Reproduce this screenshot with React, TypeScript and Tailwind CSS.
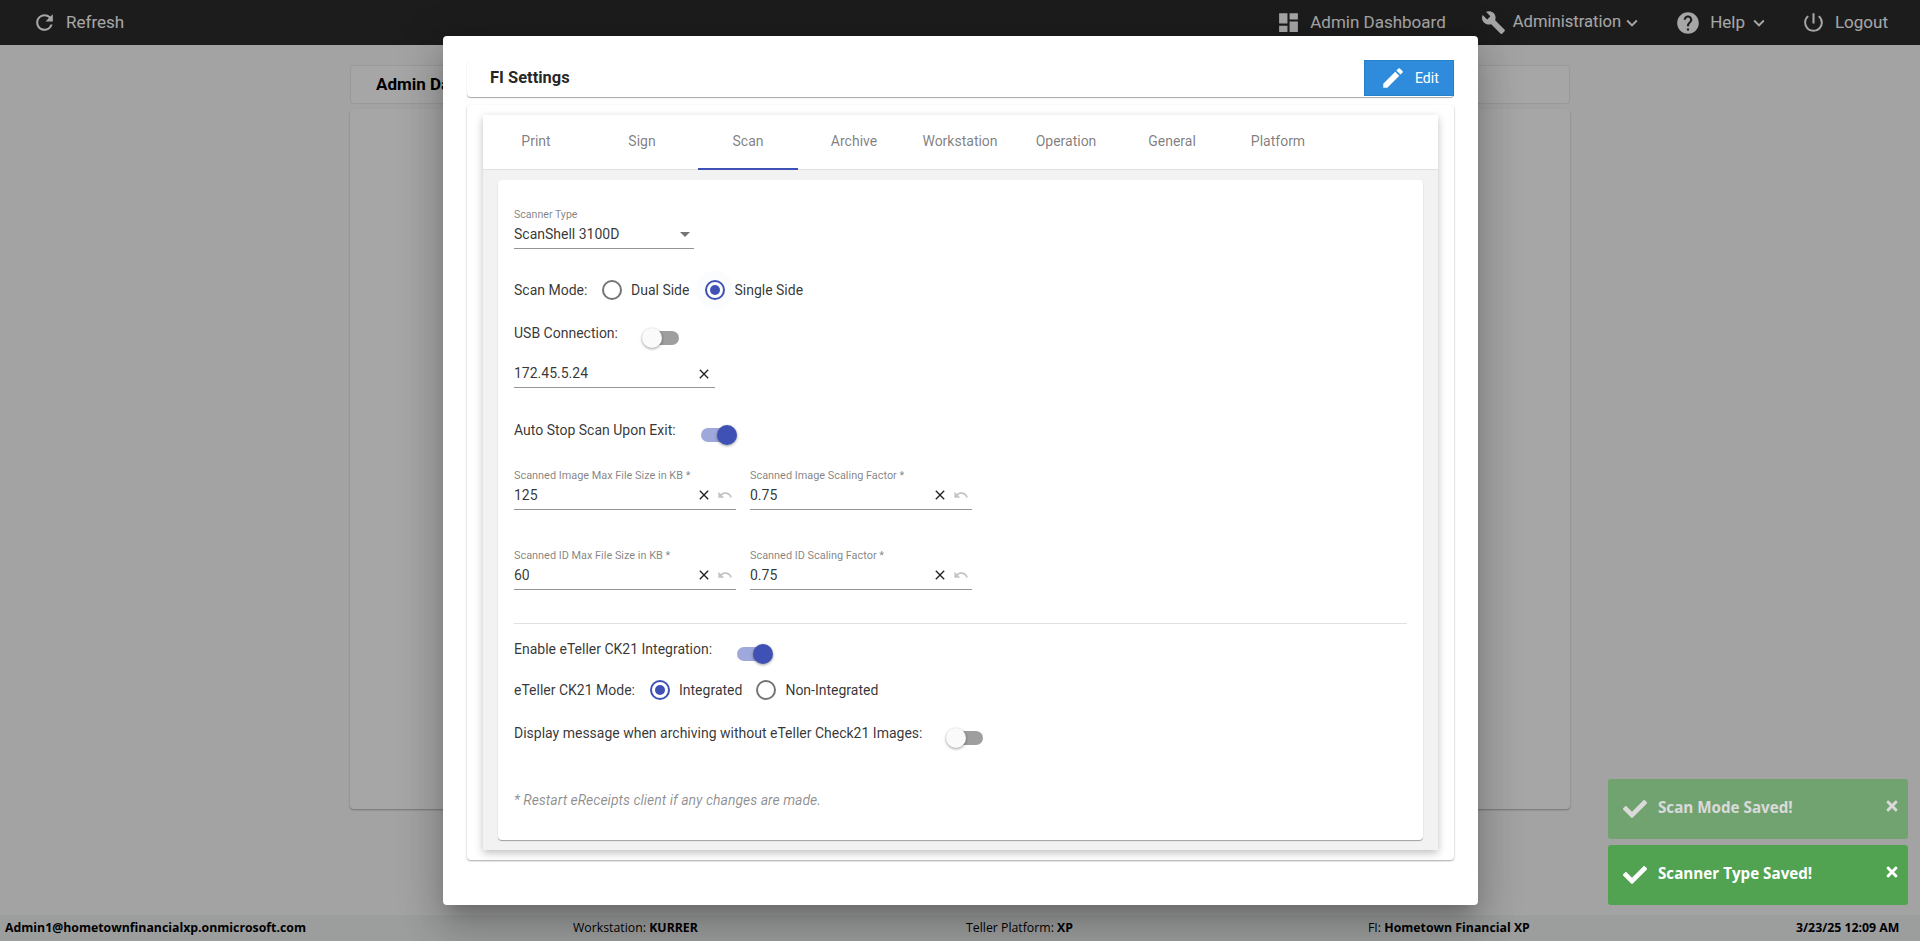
import React from "react";
import { FaCheck, FaTimes } from "react-icons/fa";
import {
  MdBuild,
  MdClose,
  MdDashboard,
  MdEdit,
  MdHelp,
  MdKeyboardArrowDown,
  MdPowerSettingsNew,
  MdRefresh,
  MdUndo,
} from "react-icons/md";

function Switch({ on, labelWidth, label }: { on?: boolean; labelWidth: string; label: string }) {
  return (
    <div className="flex items-start h-[38px]">
      <span className={`${labelWidth} mt-[4px] text-[14px] leading-[20px] text-[#000000cc]`}>{label}</span>
      <div className="relative w-[58px] h-[38px]">
        <div className={`absolute left-[12px] top-[12px] w-[34px] h-[14px] rounded-full ${on ? "bg-[#9fa8da]" : "bg-[#9e9e9e]"}`} />
        <div
          className={`absolute top-[9px] w-[20px] h-[20px] rounded-full shadow-[0_1px_3px_rgba(0,0,0,.4)] ${
            on ? "left-[28px] bg-[#3f51b5]" : "left-[9px] bg-[#fafafa]"
          }`}
        />
      </div>
    </div>
  );
}

function Radio({ label, checked, halo }: { label: string; checked?: boolean; halo?: boolean }) {
  return (
    <div className="flex items-center h-[38px]">
      <div className={`w-[38px] h-[38px] rounded-full flex items-center justify-center ${halo ? "bg-[#3f51b505]" : ""}`}>
        <div
          className={`w-[20px] h-[20px] rounded-full border-2 flex items-center justify-center ${
            checked ? "border-[#3f51b5]" : "border-[#757575]"
          }`}
        >
          {checked && <div className="w-[10px] h-[10px] rounded-full bg-[#3f51b5]" />}
        </div>
      </div>
      <span className="text-[14px] text-[#000000cc]">{label}</span>
    </div>
  );
}

function Field({ label, value }: { label: string; value: string }) {
  return (
    <div className="w-[222px]">
      <div className="h-[12px] pt-[1px] text-[10.9px] leading-[12px] text-[#00000080]">{label}</div>
      <div className="h-[29px] flex items-center border-b border-[#949494] text-[14px] text-[#000000cc]">
        <span className="flex-1">{value}</span>
        <MdClose size={16} className="text-[#222222]" />
        <MdUndo size={16} className="text-[#c4c4c4] ml-[5px] mr-[3px]" />
      </div>
    </div>
  );
}

function Toast({ text, faded }: { text: string; faded?: boolean }) {
  return (
    <div
      className={`w-[300px] h-[60px] rounded-[3px] flex items-center pl-[15px] pr-[8px] text-white bg-[#51a351] ${
        faded ? "opacity-60" : ""
      }`}
    >
      <FaCheck size={24} />
      <span className="ml-[11px] mb-[4px] flex-1 text-[15.2px] font-bold font-['Open_Sans',sans-serif]">{text}</span>
      <FaTimes size={16} className="mb-[6px]" />
    </div>
  );
}

export default function App() {
  const tabs = ["Print", "Sign", "Scan", "Archive", "Workstation", "Operation", "General", "Platform"];

  return (
    <div className="relative h-[941px] flex flex-col overflow-hidden bg-[#fafafa] font-['Roboto',sans-serif]">
      <header className="h-[45px] bg-[#2b2b2b] text-white flex items-center justify-between pl-[32px] pr-[32px]">
        <div className="flex items-center">
          <MdRefresh size={25} />
          <span className="ml-[9px] text-[17px]">Refresh</span>
        </div>
        <div className="flex items-center">
          <MdDashboard size={25} />
          <span className="ml-[9px] text-[17px]">Admin Dashboard</span>
          <MdBuild size={25} className="ml-[35px]" />
          <span className="ml-[7px] text-[16.6px]">Administration</span>
          <MdKeyboardArrowDown size={22} />
          <MdHelp size={26} className="ml-[32px]" />
          <span className="ml-[9px] text-[17px]">Help</span>
          <MdKeyboardArrowDown size={22} className="ml-[3px]" />
          <MdPowerSettingsNew size={25} className="ml-[31px]" />
          <span className="ml-[9px] text-[17px]">Logout</span>
        </div>
      </header>

      <main className="flex-1 w-[1220px] ml-[350px] pt-[20px]">
        <div className="h-[39px] rounded-[4px] border border-[#00000014] bg-white pl-[25px] flex items-center font-bold text-[17px] text-black">
          Admin Dashboard
        </div>
        <div className="mt-[5px] h-[700px] rounded-[4px] bg-white shadow-[0_1px_2px_rgba(0,0,0,.3)]" />
      </main>

      <footer className="h-[26px] bg-[#f0f1f2] flex items-center pl-[5px] text-[12.3px] text-black font-['Open_Sans',sans-serif]">
        <b className="w-[568px]">Admin1@hometownfinancialxp.onmicrosoft.com</b>
        <span className="w-[393px]">
          Workstation: <b>KURRER</b>
        </span>
        <span className="w-[402px]">
          Teller Platform: <b>XP</b>
        </span>
        <span className="w-[428px]">
          FI: <b>Hometown Financial XP</b>
        </span>
        <b>3/23/25 12:09 AM</b>
      </footer>

      <div className="absolute inset-0 bg-[#00000059]" />

      <div className="absolute left-[443px] top-[36px] w-[1035px] h-[869px] rounded-[4px] bg-white px-[24px] pt-[24px] shadow-[0_11px_15px_-7px_rgba(0,0,0,.2),0_24px_38px_3px_rgba(0,0,0,.14),0_9px_46px_8px_rgba(0,0,0,.12)]">
        <div className="h-[37px] rounded-[4px] flex items-start justify-between shadow-[0_1px_1px_rgba(0,0,0,.35)]">
          <span className="ml-[23px] mt-[6px] text-[16.5px] font-bold text-[#000000de]">FI Settings</span>
          <button className="w-[90px] h-[36px] flex items-center bg-[#2f8cdc] border border-[#2a7fc9] pl-[15px] text-white text-[14px]">
            <MdEdit size={26} />
            <span className="ml-[9px]">Edit</span>
          </button>
        </div>

        <div className="mt-[8px] h-[755px] rounded-[4px] px-[16px] pt-[10px] shadow-[0_1px_2px_rgba(0,0,0,.35)]">
          <div className="h-[735px] flex flex-col bg-[#f2f2f2] shadow-[0_3px_8px_rgba(0,0,0,.25)]">
            <div className="h-[55px] flex items-stretch bg-white border-b border-[#e0e0e0] shrink-0">
              {tabs.map((tab) => (
                <div key={tab} className="relative w-[106px] pb-[2px] flex items-center justify-center text-[14px] text-[#00000085]">
                  {tab}
                  {tab === "Scan" && <div className="absolute left-[3px] right-[3px] -bottom-[1px] h-[2px] bg-[#3f51b5]" />}
                </div>
              ))}
            </div>

            <div className="mx-[15px] mt-[10px] flex-1 mb-[10px] rounded-[4px] bg-white px-[16px] pt-[28px] shadow-[0_1px_1px_rgba(0,0,0,.35)]">
              <div className="w-[180px]">
                <div className="h-[12px] pt-[1px] text-[10.6px] leading-[12px] text-[#00000080]">Scanner Type</div>
                <div className="h-[29px] flex items-center justify-between border-b border-[#949494] text-[14px] text-[#000000cc]">
                  ScanShell 3100D
                  <div className="mr-[4px] w-0 h-0 border-x-[5px] border-x-transparent border-t-[5px] border-t-[#757575]" />
                </div>
              </div>

              <div className="mt-[22px] flex items-center">
                <span className="w-[79px] text-[14px] text-[#000000cc]">Scan Mode:</span>
                <Radio label="Dual Side" />
                <div className="ml-[7px]">
                  <Radio label="Single Side" checked halo />
                </div>
              </div>

              <div className="mt-[10px]">
                <Switch labelWidth="w-[119px]" label="USB Connection:" />
              </div>

              <div className="mt-[3px] w-[201px] h-[28px] flex items-center justify-between border-b border-[#949494] text-[14px] text-[#000000cc]">
                172.45.5.24
                <MdClose size={16} className="text-[#222222] mr-[3px]" />
              </div>

              <div className="mt-[28px]">
                <Switch on labelWidth="w-[175px]" label="Auto Stop Scan Upon Exit:" />
              </div>

              <div className="mt-[15px] flex gap-[14px]">
                <Field label="Scanned Image Max File Size in KB *" value="125" />
                <Field label="Scanned Image Scaling Factor *" value="0.75" />
              </div>
              <div className="mt-[39px] flex gap-[14px]">
                <Field label="Scanned ID Max File Size in KB *" value="60" />
                <Field label="Scanned ID Scaling Factor *" value="0.75" />
              </div>

              <div className="mt-[33px] h-px bg-[#e0e0e0]" />

              <div className="mt-[11px] h-[36px]">
                <Switch on labelWidth="w-[211px]" label="Enable eTeller CK21 Integration:" />
              </div>

              <div className="flex items-center">
                <span className="w-[127px] text-[14px] text-[#000000cc]">eTeller CK21 Mode:</span>
                <Radio label="Integrated" checked />
                <div className="ml-[5px]">
                  <Radio label="Non-Integrated" />
                </div>
              </div>

              <div className="mt-[10px]">
                <Switch labelWidth="w-[423px]" label="Display message when archiving without eTeller Check21 Images:" />
              </div>

              <div className="mt-[33px] h-[20px] text-[14px] leading-[20px] italic text-[#00000073]">
                * Restart eReceipts client if any changes are made.
              </div>
            </div>
          </div>
        </div>
      </div>

      <div className="absolute left-[1608px] top-[779px] flex flex-col gap-[6px]">
        <Toast text="Scan Mode Saved!" faded />
        <Toast text="Scanner Type Saved!" />
      </div>
    </div>
  );
}
